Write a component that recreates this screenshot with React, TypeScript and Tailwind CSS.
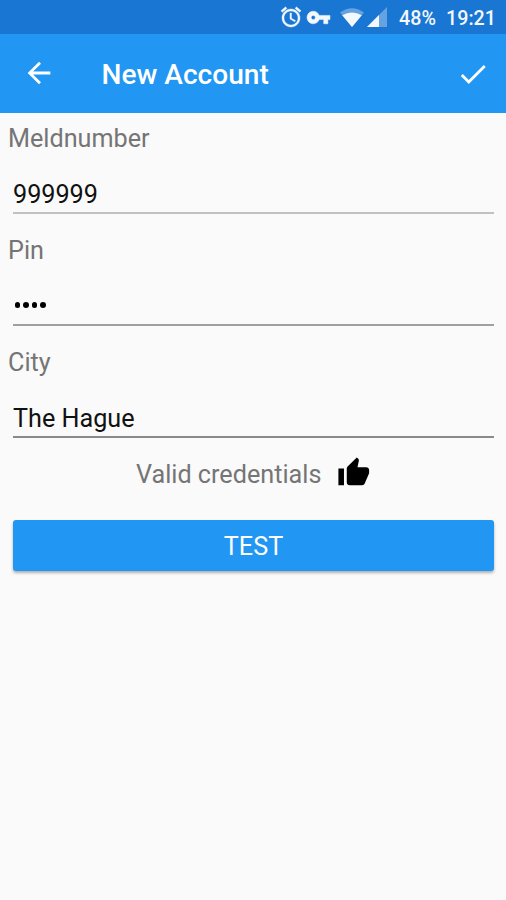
import React from "react";

type IconProps = { className?: string; d: string };

function Icon({ className, d }: IconProps) {
  return (
    <svg viewBox="0 0 24 24" fill="currentColor" className={`shrink-0 ${className ?? ""}`}>
      <path d={d} />
    </svg>
  );
}

const ALARM =
  "M22 5.72l-4.6-3.86-1.29 1.53 4.6 3.86L22 5.72zM7.88 3.39L6.6 1.86 2 5.71l1.29 1.53 4.59-3.85zM12.5 8H11v6l4.75 2.85.75-1.23-4-2.37V8zM12 4c-4.97 0-9 4.03-9 9s4.02 9 9 9c4.97 0 9-4.03 9-9s-4.03-9-9-9zm0 16c-3.87 0-7-3.13-7-7s3.13-7 7-7 7 3.13 7 7-3.13 7-7 7z";
const KEY =
  "M12.65 10C11.83 7.67 9.61 6 7 6c-3.31 0-6 2.69-6 6s2.69 6 6 6c2.61 0 4.83-1.67 5.65-4H17v4h4v-4h2v-4H12.65zM7 14c-1.1 0-2-.9-2-2s.9-2 2-2 2 .9 2 2-.9 2-2 2z";
const BACK = "M20 11H7.83l5.59-5.59L12 4l-8 8 8 8 1.41-1.41L7.83 13H20v-2z";
const CHECK = "M9 16.17L4.83 12l-1.42 1.41L9 19 21 7l-1.41-1.41z";
const THUMB =
  "M1 21h4V9H1v12zm22-11c0-1.1-.9-2-2-2h-6.31l.95-4.57.03-.32c0-.41-.17-.79-.44-1.06L14.17 1 7.59 7.59C7.22 7.95 7 8.45 7 9v10c0 1.1.9 2 2 2h9c.83 0 1.54-.5 1.84-1.22l3.02-7.05c.09-.23.14-.47.14-.73v-2z";

function StatusBar() {
  return (
    <div className="flex h-[34px] items-center bg-[#1976d2] pl-[279px] text-[#f3f8fd]">
      <Icon d={ALARM} className="size-6 stroke-current stroke-[0.4]" />
      <Icon d={KEY} className="ml-[3px] size-[25px] stroke-current stroke-[0.5] [stroke-linejoin:round]" />
      <svg viewBox="0 0 24 19" className="ml-[9px] h-[19px] w-6 shrink-0" fill="currentColor">
        <path d="M0 4.5Q12-4 24 4.5L12 19Z" opacity=".35" />
        <path d="M2.2 7.2Q12 1.8 21.8 7.2L12 19Z" />
      </svg>
      <svg viewBox="0 0 20 20" className="ml-[3px] size-5 shrink-0" fill="currentColor">
        <path d="M0 20L20 0V20Z" opacity=".35" />
        <path d="M0 20L12 8V20Z" />
      </svg>
      <span className="ml-[12px] w-[47px] pt-[3px] text-[19.7px] font-medium leading-none">48%</span>
      <span className="pt-[3px] text-[19.7px] font-medium leading-none">19:21</span>
    </div>
  );
}

function Field({ label, line, children }: { label: string; line: string; children: React.ReactNode }) {
  return (
    <div className="h-28">
      <div className="h-[50px] pl-2 pt-[11px] text-[25.2px] leading-[30px] text-[#757575]">{label}</div>
      <div className={`ml-[13px] mr-3 flex h-[51px] items-center pt-[14px] text-[25.2px] leading-[30px] text-[#111] ${line}`}>
        {children}
      </div>
    </div>
  );
}

export default function App() {
  return (
    <div className="h-[900px] w-[506px] overflow-hidden bg-[#fafafa] font-['Roboto',sans-serif]">
      <StatusBar />
      <header className="flex h-[79px] items-center bg-[#2196f3] pl-[22px] pr-4 text-white">
        <Icon d={BACK} className="mb-[2px] size-[34px]" />
        <h1 className="ml-[45.5px] pt-[2px] text-[28.1px] font-medium leading-8">New Account</h1>
        <Icon d={CHECK} className="ml-auto size-[34px]" />
      </header>
      <main>
        <Field label="Meldnumber" line="border-b-2 border-[#c1c1c1]">999999</Field>
        <Field label="Pin" line="border-b-2 border-[#a0a0a0]">
          <span className="mb-[3px] flex gap-[3px] pl-[1.5px]">
            <i className="size-[5.5px] rounded-full bg-black" />
            <i className="size-[5.5px] rounded-full bg-black" />
            <i className="size-[5.5px] rounded-full bg-black" />
            <i className="size-[5.5px] rounded-full bg-black" />
          </span>
        </Field>
        <Field label="City" line="border-b-2 border-[#8a8a8a]">The Hague</Field>
        <div className="mt-[7px] flex h-[34px] items-center pl-[136px] text-[#757575]">
          <span className="w-[200.5px] pt-[4px] text-[25.2px] leading-[30px]">Valid credentials</span>
          <Icon d={THUMB} className="size-[33.5px] text-black" />
        </div>
        <button className="ml-[13px] mt-[30px] flex h-[51px] w-[481px] items-center justify-center rounded-[3px] bg-[#2196f3] pt-[3px] text-[25.2px] leading-[30px] text-white shadow-[0_2px_3px_rgba(0,0,0,0.3)]">
          TEST
        </button>
      </main>
    </div>
  );
}
